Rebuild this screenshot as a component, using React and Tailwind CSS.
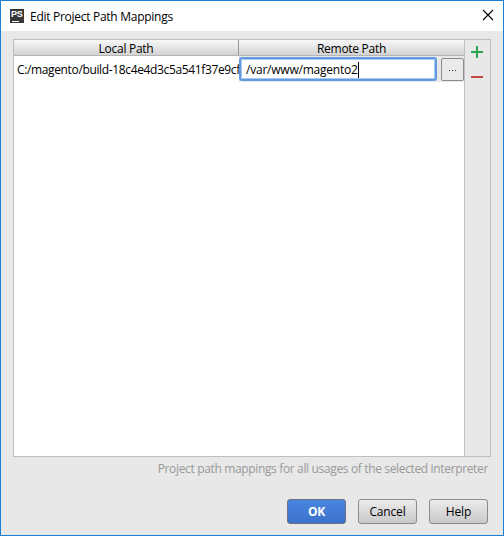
import React from 'react';

function AppIcon() {
  return (
    <div className="relative h-[14px] w-[14px] bg-[#37373a] font-['Liberation_Sans',sans-serif] text-[9px] leading-[9px] font-bold text-white">
      <span className="absolute top-[1px] left-[1px] tracking-[-0.2px]">PS</span>
      <span className="absolute bottom-[1px] left-[2px] h-px w-[7px] bg-white" />
    </div>
  );
}

function TitleBar() {
  return (
    <header className="flex h-[30px] shrink-0 items-center bg-white pr-[9px] pl-[9px]">
      <AppIcon />
      <h1 className="mt-px ml-[6px] text-[12px] leading-[16px] tracking-[-0.28px] text-black">Edit Project Path Mappings</h1>
      <button aria-label="Close" className="mb-[2px] ml-auto">
        <svg width="12" height="12" viewBox="0 0 12 12" className="block" stroke="#000" strokeWidth="1.1">
          <path d="M1 1L11 11M11 1L1 11" />
        </svg>
      </button>
    </header>
  );
}

function HeaderCell({ children, className }) {
  return (
    <div className={`flex items-center justify-center bg-linear-to-b from-[#f8f8f8] to-[#d3d3d3] pt-[2px] ${className}`}>
      {children}
    </div>
  );
}

function MappingTable() {
  return (
    <div className="flex w-[450px] flex-col bg-white">
      <div className="flex h-[16px] border-b border-[#b4b4b4] leading-[15px] tracking-[-0.28px]">
        <HeaderCell className="w-[225px] border-r border-[#999]">Local Path</HeaderCell>
        <HeaderCell className="w-[225px]">Remote Path</HeaderCell>
      </div>
      <div className="flex h-[26px] bg-white">
        <div className="w-[225px] overflow-hidden pt-[6px] pl-[3px] leading-[16px] tracking-[-0.36px] whitespace-nowrap">
          C:/magento/build-18c4e4d3c5a541f37e9cf
        </div>
        <div className="flex w-[225px] items-start bg-[#e8e8e8] pt-px">
          <div className="flex h-[24px] w-[198px] items-center rounded-[3px] border-2 border-[#6299df] bg-white pt-px pl-[5px] tracking-[-0.22px] ring-1 ring-[#a7c8f2] ring-inset">
            /var/www/magento2
            <span className="h-[16px] w-px bg-black" />
          </div>
          <button className="mt-px ml-[4px] flex h-[23px] w-[23px] items-center justify-center gap-[2px] rounded-[2px] border border-[#8c8c8c] bg-[#eaeaea]">
            <i className="mt-[2px] h-px w-px bg-[#333]" />
            <i className="mt-[2px] h-px w-px bg-[#333]" />
            <i className="mt-[2px] h-px w-px bg-[#333]" />
          </button>
        </div>
      </div>
    </div>
  );
}

function Toolbar() {
  return (
    <div className="flex flex-1 flex-col items-start border-l border-[#bfbfbf] bg-[#e8e8e8] pt-[6px] pl-[6px]">
      <svg width="12" height="12" viewBox="0 0 12 12">
        <path d="M5 0h2v5h5v2H7v5H5V7H0V5h5z" fill="#2ba34a" />
      </svg>
      <svg width="12" height="2" viewBox="0 0 12 2" className="mt-[18px]">
        <path d="M0 0h12v2H0z" fill="#c5493f" />
      </svg>
    </div>
  );
}

function DialogButton({ children, primary }) {
  const look = primary
    ? 'border-[#6b7382] bg-linear-to-b from-[#4985e0] to-[#3d72cc] font-bold text-white'
    : 'border-[#8b8b8b] bg-linear-to-b from-[#ececec] to-[#c9c9c9] text-black';
  return (
    <button className={`flex h-[25px] w-[59px] items-center justify-center rounded-[3px] border pt-px leading-[16px] tracking-[-0.15px] ${look}`}>
      {children}
    </button>
  );
}

export default function App() {
  return (
    <div className="flex h-[536px] w-[504px] flex-col border border-[#1b7fd2] bg-[#e8e8e8] font-['Open_Sans',sans-serif] text-[12px] text-black">
      <TitleBar />
      <main className="mt-[8px] ml-[12px] flex h-[418px] w-[478px] border border-[#bfbfbf]">
        <MappingTable />
        <Toolbar />
      </main>
      <p className="mt-[4px] pr-[15px] text-right leading-[16px] tracking-[-0.35px] text-[#999]">
        Project path mappings for all usages of the selected interpreter
      </p>
      <footer className="mt-[22px] flex justify-end gap-[12px] pr-[15px]">
        <DialogButton primary>OK</DialogButton>
        <DialogButton>Cancel</DialogButton>
        <DialogButton>Help</DialogButton>
      </footer>
    </div>
  );
}
